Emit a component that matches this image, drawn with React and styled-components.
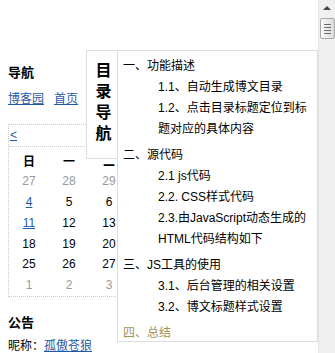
import React from 'react';
import styled, { createGlobalStyle } from 'styled-components';

const GlobalStyle = createGlobalStyle`
  html, body {
    margin: 0;
    padding: 0;
    background: #fff;
  }
  body {
    font-family: "Liberation Sans", "Noto Sans CJK SC", sans-serif;
    font-size: 12px;
    color: #000;
  }
`;

const Page = styled.div`
  display: flex;
  width: 335px;
  height: 353px;
  overflow: hidden;
`;

const Main = styled.div`
  position: relative;
  flex: 1;
  padding: 63px 0 0 8px;
  overflow: hidden;
`;

const SideTitle = styled.h3`
  margin: ${(p) => p.$top || 0}px 0 0;
  font-size: 13px;
  font-weight: bold;
  line-height: 20px;
`;

const LinkRow = styled.div`
  display: flex;
  gap: 10px;
  margin-top: ${(p) => p.$top || 0}px;
  line-height: 20px;
`;

const Link = styled.a`
  color: #1f5aa6;
  text-decoration: underline;
`;

const Calendar = styled.div`
  width: 282px;
  margin-top: 15px;
  border: 1px dotted #c8c8c8;
`;

const CalHead = styled.div`
  height: 21px;
  line-height: 21px;
  padding-left: 1px;
  border-bottom: 1px dotted #c8c8c8;
`;

const CalGrid = styled.div`
  display: grid;
  grid-template-columns: repeat(7, 40px);
  grid-auto-rows: 20.8px;
  padding-top: 3px;
`;

const Cell = styled.div`
  display: flex;
  align-items: center;
  justify-content: center;
  font-size: 12px;
  font-weight: ${(p) => (p.$head ? 'bold' : 'normal')};
  color: ${(p) => (p.$muted ? '#999' : '#000')};
  ${(p) => p.$head && 'height: 21px;'}
`;

const Toc = styled.div`
  position: absolute;
  top: 50px;
  left: 86px;
  display: flex;
  align-items: flex-start;
`;

const TocTab = styled.div`
  box-sizing: border-box;
  width: 31px;
  height: 109px;
  padding: 9px 2px 0 5px;
  border: 1px solid #ddd;
  border-right: none;
  background: #fff;
  font-size: 16px;
  font-weight: bold;
  line-height: 21px;
  text-align: center;
  word-break: break-all;
`;

const TocPanel = styled.div`
  box-sizing: border-box;
  width: 201px;
  height: 292px;
  padding: 0 4px 0 5px;
  border: 1px solid #ddd;
  background: #fff;
  overflow: hidden;
`;

const TocItem = styled.div`
  line-height: 21px;
  margin-top: ${(p) => (p.$level === 1 ? 5 : 0)}px;
  padding-left: ${(p) => (p.$level === 1 ? 0 : 35)}px;
  color: ${(p) => (p.$active ? '#a3915a' : '#000')};
`;

const Scrollbar = styled.aside`
  box-sizing: border-box;
  width: 17px;
  height: 353px;
  display: flex;
  flex-direction: column;
  align-items: center;
  background: #f0f0f0;
  border-left: 1px solid #e6e6e6;
`;

const ArrowUp = styled.div`
  width: 0;
  height: 0;
  margin-top: 6px;
  border-left: 4px solid transparent;
  border-right: 4px solid transparent;
  border-bottom: 4px solid #444;
`;

const Thumb = styled.div`
  box-sizing: border-box;
  width: 15px;
  height: 21px;
  margin-top: 8px;
  display: flex;
  flex-direction: column;
  align-items: center;
  justify-content: center;
  gap: 2px;
  border: 1px solid #a9a9a9;
  border-radius: 2px;
  background: linear-gradient(to right, #fafafa, #dcdcdc);
`;

const Grip = styled.span`
  width: 7px;
  height: 1px;
  background: #6c6c6c;
`;

const weekdays = ['日', '一', '二', '三', '四', '五', '六'];

const days = [
  ...[27, 28, 29, 30].map((d) => ({ d, muted: true })),
  ...Array.from({ length: 31 }, (_, i) => ({ d: i + 1 })),
  ...[1, 2, 3, 4, 5, 6, 7].map((d) => ({ d, muted: true })),
];

const linked = [4, 11];

const toc = [
  { level: 1, text: '一、功能描述' },
  { level: 2, text: '1.1、自动生成博文目录' },
  { level: 2, text: '1.2、点击目录标题定位到标题对应的具体内容' },
  { level: 1, text: '二、源代码' },
  { level: 2, text: '2.1 js代码' },
  { level: 2, text: '2.2. CSS样式代码' },
  { level: 2, text: '2.3.由JavaScript动态生成的HTML代码结构如下' },
  { level: 1, text: '三、JS工具的使用' },
  { level: 2, text: '3.1、后台管理的相关设置' },
  { level: 2, text: '3.2、博文标题样式设置' },
  { level: 1, text: '四、总结', active: true },
];

export default function App() {
  return (
    <Page>
      <GlobalStyle />
      <Main>
        <SideTitle>导航</SideTitle>
        <LinkRow $top={6}>
          <Link href="#">博客园</Link>
          <Link href="#">首页</Link>
        </LinkRow>

        <Calendar>
          <CalHead>
            <Link href="#">&lt;</Link>
          </CalHead>
          <CalGrid>
            {weekdays.map((w) => (
              <Cell key={w} $head>{w}</Cell>
            ))}
            {days.map((day, i) => (
              <Cell key={i} $muted={day.muted}>
                {!day.muted && linked.includes(day.d) ? <Link href="#">{day.d}</Link> : day.d}
              </Cell>
            ))}
          </CalGrid>
        </Calendar>

        <SideTitle $top={16}>公告</SideTitle>
        <LinkRow $top={3} style={{ gap: 0 }}>
          昵称：<Link href="#">孤傲苍狼</Link>
        </LinkRow>

        <Toc>
          <TocTab>目录导航</TocTab>
          <TocPanel>
            {toc.map((item) => (
              <TocItem key={item.text} $level={item.level} $active={item.active}>
                {item.text}
              </TocItem>
            ))}
          </TocPanel>
        </Toc>
      </Main>
      <Scrollbar>
        <ArrowUp />
        <Thumb>
          <Grip />
          <Grip />
          <Grip />
          <Grip />
        </Thumb>
      </Scrollbar>
    </Page>
  );
}
